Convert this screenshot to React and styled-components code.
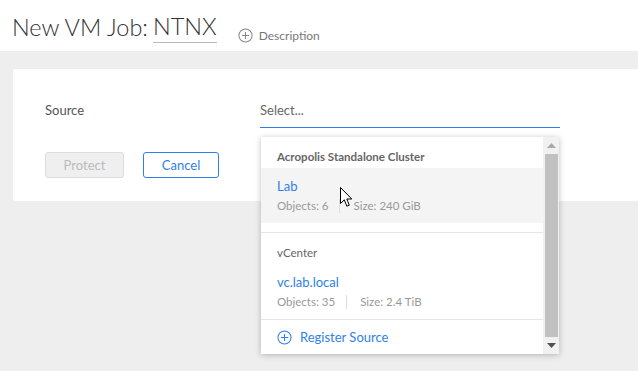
import React from 'react';
import styled, {createGlobalStyle} from 'styled-components';

const BLUE = '#2f7fe6';

const GlobalStyle = createGlobalStyle`
    html {
        overflow: hidden;
    }
    body {
        margin: 0;
        padding: 0;
        min-height: 371px;
        background: #eeeeee;
        font-family: Lato, "Open Sans", sans-serif;
        color: #555;
    }
`;

const Header = styled.div`
    height: 51px;
    background: #fff;
    display: flex;
    align-items: flex-end;
    padding-left: 12px;
    box-sizing: border-box;
`;

const Title = styled.h1`
    margin: 0 0 8px 0;
    font-size: 23.5px;
    font-weight: 300;
    color: #333;
    line-height: 30px;
    display: flex;
    gap: 5px;
`;

const JobName = styled.span`
    border-bottom: 1px solid #bbb;
    padding-bottom: 2px;
    line-height: 28px;
`;

const DescLink = styled.span`
    display: flex;
    align-items: center;
    gap: 6px;
    margin: 0 0 8px 21px;
    font-size: 12px;
    color: #777;
`;

const Main = styled.div`
    padding: 18px 0 0 13px;
`;

const Card = styled.div`
    background: #fff;
    border-radius: 3px 0 0 3px;
    padding: 28px 32px 23px;
    margin-right: -10px;
`;

const FieldRow = styled.div`
    display: grid;
    grid-template-columns: 215px 300px;
    align-items: start;
`;

const Label = styled.div`
    font-size: 13px;
    line-height: 26px;
    color: #555;
`;

const SelectWrap = styled.div`
    position: relative;
`;

const SelectBox = styled.div`
    height: 30px;
    border-bottom: 1px solid ${BLUE};
    font-size: 13px;
    line-height: 26px;
    color: #666;
`;

const ButtonRow = styled.div`
    display: flex;
    gap: 19px;
    margin-top: 24px;
`;

const Button = styled.button`
    height: 26px;
    box-sizing: border-box;
    padding: 0 16px;
    border-radius: 3px;
    font-family: inherit;
    font-size: 13px;
    background: ${(p) => (p.$disabled ? '#efefef' : '#fff')};
    border: 1px solid ${(p) => (p.$disabled ? '#ddd' : BLUE)};
    color: ${(p) => (p.$disabled ? '#bbb' : BLUE)};
    width: ${(p) => p.$w}px;
`;

const Dropdown = styled.div`
    position: absolute;
    left: 1px;
    top: 40px;
    width: 298px;
    height: 217px;
    background: #fff;
    box-shadow: 0 1px 6px rgba(0, 0, 0, 0.25);
    display: flex;
`;

const List = styled.div`
    flex: 1;
    display: flex;
    flex-direction: column;
`;

const Group = styled.div`
    border-bottom: 1px solid #e6e6e6;
    padding-bottom: ${(p) => p.$pad || 0}px;
`;

const GroupTitle = styled.div`
    padding: 12px 16px 3px;
    font-size: 11.5px;
    font-weight: ${(p) => (p.$bold ? 700 : 400)};
    line-height: 16px;
    color: #666;
`;

const Item = styled.div`
    padding: 10px 16px 8px;
    background: ${(p) => (p.$hover ? '#f4f4f4' : 'transparent')};
`;

const ItemName = styled.div`
    font-size: 13px;
    line-height: 17px;
    color: ${BLUE};
`;

const Meta = styled.div`
    display: flex;
    align-items: center;
    font-size: 11.5px;
    line-height: 18px;
    margin-top: 2px;
    color: #999;
`;

const MetaSep = styled.span`
    width: 1px;
    height: 14px;
    background: #ddd;
    margin: 0 13px 0 11px;
`;

const RegisterRow = styled.div`
    display: flex;
    align-items: center;
    gap: 8px;
    padding: 9px 16px 10px;
    font-size: 13px;
    line-height: 16px;
    color: ${BLUE};
`;

const Scrollbar = styled.div`
    width: 16px;
    background: #f1f1f1;
    display: flex;
    flex-direction: column;
    align-items: center;
`;

const Arrow = styled.div`
    height: 17px;
    display: flex;
    align-items: center;
    justify-content: center;
`;

const Thumb = styled.div`
    flex: 1;
    width: 13px;
    background: #c1c1c1;
`;

const Cursor = styled.svg`
    position: absolute;
    left: 79px;
    top: 50px;
`;

const PlusCircle = ({size, color}) => (
    <svg width={size} height={size} viewBox='0 0 16 16'>
        <circle cx='8' cy='8' r='7' fill='none' stroke={color} strokeWidth='1.1'/>
        <path d='M8 4.2v7.6M4.2 8h7.6' stroke={color} strokeWidth='1.1'/>
    </svg>
);

const Triangle = ({up, color}) => (
    <svg width='9' height='5' viewBox='0 0 9 5'>
        <path d={up ? 'M0 5L4.5 0L9 5z' : 'M0 0L4.5 5L9 0z'} fill={color}/>
    </svg>
);

const sources = [
    {
        title: 'Acropolis Standalone Cluster',
        bold: true,
        pad: 9,
        name: 'Lab',
        objects: 'Objects: 6',
        size: 'Size: 240 GiB',
        hover: true,
    },
    {
        title: 'vCenter',
        name: 'vc.lab.local',
        objects: 'Objects: 35',
        size: 'Size: 2.4 TiB',
    },
];

const App = () => {
    return (
        <>
            <GlobalStyle/>
            <Header>
                <Title>
                    {'New VM Job:'}
                    <JobName>{'NTNX'}</JobName>
                </Title>
                <DescLink>
                    <PlusCircle size={15} color='#888'/>
                    {'Description'}
                </DescLink>
            </Header>
            <Main>
                <Card>
                    <FieldRow>
                        <Label>{'Source'}</Label>
                        <SelectWrap>
                            <SelectBox>{'Select...'}</SelectBox>
                            <Dropdown>
                                <List>
                                    {sources.map((s) => (
                                        <Group key={s.name} $pad={s.pad}>
                                            <GroupTitle $bold={s.bold}>{s.title}</GroupTitle>
                                            <Item $hover={s.hover}>
                                                <ItemName>{s.name}</ItemName>
                                                <Meta>
                                                    {s.objects}
                                                    <MetaSep/>
                                                    {s.size}
                                                </Meta>
                                            </Item>
                                        </Group>
                                    ))}
                                    <RegisterRow>
                                        <PlusCircle size={15} color={BLUE}/>
                                        {'Register Source'}
                                    </RegisterRow>
                                </List>
                                <Scrollbar>
                                    <Arrow><Triangle up color='#a8a8a8'/></Arrow>
                                    <Thumb/>
                                    <Arrow><Triangle color='#505050'/></Arrow>
                                </Scrollbar>
                                <Cursor width='13' height='21' viewBox='0 0 13 21'>
                                    <path
                                        d='M0.5 0.5L0.5 16.5L4.3 12.8L6.8 19.2L9.3 18.2L6.8 12L11.8 12Z'
                                        fill='#fff'
                                        stroke='#000'
                                        strokeWidth='1'
                                        strokeLinejoin='miter'
                                    />
                                </Cursor>
                            </Dropdown>
                        </SelectWrap>
                    </FieldRow>
                    <ButtonRow>
                        <Button $disabled $w={79}>{'Protect'}</Button>
                        <Button $w={76}>{'Cancel'}</Button>
                    </ButtonRow>
                </Card>
            </Main>
        </>
    );
};

export default App;
